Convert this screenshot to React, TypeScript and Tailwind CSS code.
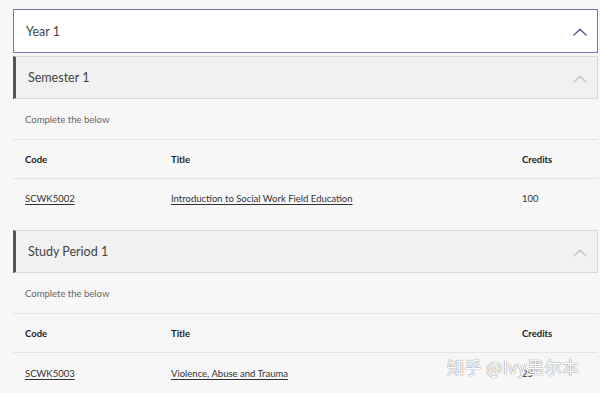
import React from "react";

const Chevron = ({ color }: { color: string }) => (
  <svg width="14" height="8" viewBox="0 0 14 8" fill="none">
    <polyline points="1,7 7,1.2 13,7" stroke={color} strokeWidth="1.4" strokeLinecap="round" strokeLinejoin="round" />
  </svg>
);

const SubHeader = ({ title }: { title: string }) => (
  <div className="h-[43px] flex items-center justify-between bg-[#f1f1f1] border border-[#d8d8d8] border-l-[3px] border-l-[#555555] pl-[12px] pr-[10px] pt-[2px]">
    <span className="text-[12.5px] text-[#444444]">{title}</span>
    <Chevron color="#c4c4c4" />
  </div>
);

const Table = ({ code, title, credits, last }: { code: string; title: string; credits: string; last?: boolean }) => (
  <div>
    <div className="h-[41px] flex items-center px-[12px] pt-[3px] border-b border-[#e4e4e4] text-[9.5px] text-[#666666]">
      Complete the below
    </div>
    <div className="h-[39px] grid grid-cols-[146px_351px_1fr] items-center px-[12px] pt-[2px] border-b border-[#e4e4e4] text-[9.5px] font-bold text-[#222222]">
      <span>Code</span>
      <span>Title</span>
      <span>Credits</span>
    </div>
    <div className={`${last ? "h-[41px]" : "h-[38px] mb-[13px]"} grid grid-cols-[146px_351px_1fr] items-center px-[12px] pt-[2px] text-[9.5px] text-[#333333]`}>
      <span className="underline underline-offset-2">{code}</span>
      <span className="underline underline-offset-2">{title}</span>
      <span>{credits}</span>
    </div>
  </div>
);

export default function App() {
  return (
    <div className="relative w-[600px] h-[393px] overflow-hidden bg-[#f7f7f7] pt-[9px] pl-[13px] pr-[2px]" style={{ fontFamily: "Lato, 'Noto Sans', sans-serif" }}>
      <div className="h-[44px] flex items-center justify-between bg-white border-[1.5px] border-[#7b71c4] pl-[12px] pr-[10px] pt-[2px]">
        <span className="text-[12.5px] text-[#444444]">Year 1</span>
        <Chevron color="#5d55a0" />
      </div>
      <div className="mt-[3px]">
        <SubHeader title="Semester 1" />
        <Table code="SCWK5002" title="Introduction to Social Work Field Education" credits="100" />
        <SubHeader title="Study Period 1" />
        <Table code="SCWK5003" title="Violence, Abuse and Trauma" credits="25" last />
      </div>
      <div
        className="absolute left-[447px] top-[354px] text-[17px] text-white tracking-[0.5px] [text-shadow:0_0_1px_#777,0_0_1px_#999]"
        style={{ fontFamily: "'Noto Sans CJK SC', 'Noto Sans', sans-serif" }}
      >
        知乎 @Ivy墨尔本
      </div>
    </div>
  );
}
